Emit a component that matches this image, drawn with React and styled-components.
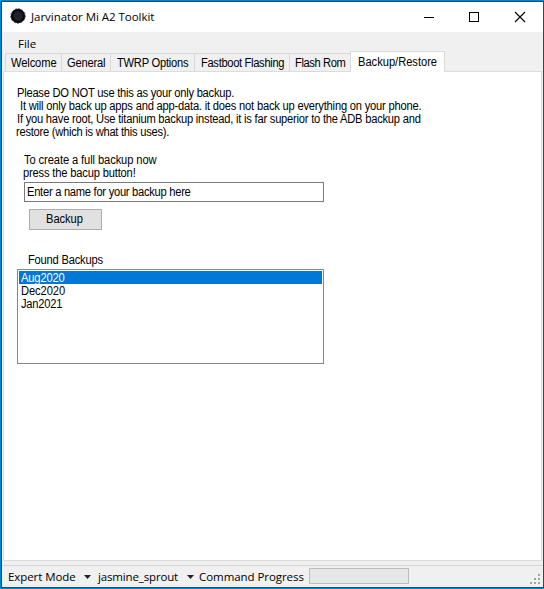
import React from 'react';
import styled, { createGlobalStyle } from 'styled-components';

const GlobalStyle = createGlobalStyle`
  * { box-sizing: border-box; }
  body { margin: 0; background: #fff; overflow: hidden; }
`;

const Window = styled.div`
  width: 544px;
  height: 589px;
  display: flex;
  flex-direction: column;
  background: #f0f0f0;
  border: 1px solid #0086d0;
  border-right: 0;
  color: #000;
  font: 12px/13px "Liberation Sans", Arial, sans-serif;
`;

const Frame = styled.div`
  flex: 1;
  display: flex;
  flex-direction: column;
  border: 1px solid #12516f;
`;

const UiText = styled.span`
  font: 11.5px/16px "Open Sans", "Noto Sans", sans-serif;
  letter-spacing: ${(p) => p.$track || 0}px;
  white-space: pre;
`;

/* Slightly condensed, like the classic dialog face. */
const Text = styled.span`
  display: block;
  letter-spacing: ${(p) => p.$track || 0}px;
  margin-left: ${(p) => p.$indent || 0}px;
  white-space: pre;
  transform: scaleX(0.93);
  transform-origin: left top;
`;

const TitleBar = styled.header`
  height: 30px;
  flex: none;
  display: flex;
  align-items: center;
  padding: 0 17px 0 8px;
  background: #fff;
`;

const AppIcon = styled.svg`
  width: 16px;
  height: 16px;
  margin: 0 5px 2px 0;
`;

const Title = styled(UiText)`
  flex: 1;
  margin-top: -1px;
`;

const Controls = styled.div`
  display: flex;
  gap: 34px;
  margin-bottom: 1px;
`;

const ControlIcon = styled.svg`
  width: 12px;
  height: 12px;
  display: block;
`;

const MenuBar = styled.nav`
  height: 19px;
  flex: none;
  padding: 4px 0 0 16px;
  display: flex;
`;

const Tabs = styled.div`
  height: 20px;
  flex: none;
  display: flex;
  align-items: flex-end;
  padding-left: 3px;
`;

const Tab = styled.div`
  width: ${(p) => p.$width}px;
  height: 18px;
  padding: 3px 0 0 ${(p) => p.$pad}px;
  border: 1px solid #d9d9d9;
  border-width: 1px 0 0 1px;
  background: #f0f0f0;
`;

const ActiveTab = styled(Tab)`
  height: 21px;
  padding-top: 4px;
  border-right-width: 1px;
  background: #fff;
  margin-bottom: -1px;
  z-index: 1;
`;

const Page = styled.main`
  width: 539px;
  height: 490px;
  flex: none;
  margin-left: 1px;
  border: 1px solid #dcdcdc;
  background: #fff;
  padding: 15px 0 0 13px;
  display: flex;
  flex-direction: column;
  align-items: flex-start;
`;

const Prompt = styled.div`
  margin: 15px 0 0 6px;
`;

const NameField = styled.div`
  width: 300px;
  height: 20px;
  margin: 2px 0 0 7px;
  padding: 3px 0 0 2px;
  border: 1px solid #7a7a7a;
`;

const Button = styled.button`
  width: 73px;
  height: 21px;
  margin: 7px 0 0 12px;
  padding: 0;
  border: 1px solid #adadad;
  background: #e1e1e1;
  font: inherit;
  color: inherit;
  display: flex;
  align-items: center;
  padding-left: 16px;
`;

const ListLabel = styled.div`
  margin: 24px 0 2px 11px;
`;

const List = styled.div`
  width: 307px;
  height: 95px;
  border: 1px solid #828790;
  padding: 1px;
`;

const ListItem = styled.div`
  height: 13px;
  padding: 1px 0 0 2px;
  background: ${(p) => (p.$selected ? '#0078d7' : 'transparent')};
  color: ${(p) => (p.$selected ? '#fff' : '#000')};
`;

const StatusBar = styled.footer`
  height: 22px;
  flex: none;
  margin-top: 4px;
  border-top: 1px solid #d7d7d7;
  display: flex;
  align-items: flex-start;
  padding: 0 3px 0 6px;
`;

const StatusItem = styled(UiText)`
  width: ${(p) => p.$width}px;
  padding-top: 3px;
`;

const DropArrow = styled.svg`
  width: 7px;
  height: 4px;
  margin: 9px ${(p) => p.$gap}px 0 0;
`;

const Progress = styled.div`
  width: 100px;
  height: 16px;
  margin-top: 2px;
  border: 1px solid #bcbcbc;
  background: #e6e6e6;
`;

const Grip = styled.svg`
  width: 10px;
  height: 10px;
  margin: 8px 0 0 auto;
`;

const tabs = [
  { label: 'Welcome', width: 56, pad: 5, track: -0.13 },
  { label: 'General', width: 49, pad: 5, track: -0.21 },
  { label: 'TWRP Options', width: 84, pad: 6, track: -0.26 },
  { label: 'Fastboot Flashing', width: 95, pad: 5.5, track: -0.35 },
  { label: 'Flash Rom', width: 61, pad: 5, track: -0.42 },
];

const backups = [
  { name: 'Aug2020', track: -0.17 },
  { name: 'Dec2020', track: -0.1 },
  { name: 'Jan2021', track: -0.23 },
];

const Arrow = ({ gap }) => (
  <DropArrow viewBox="0 0 7 4" $gap={gap}>
    <path d="M0 0h7L3.5 4z" fill="#222" />
  </DropArrow>
);

export default function App() {
  return (
    <Window>
      <GlobalStyle />
      <Frame>
        <TitleBar>
          <AppIcon viewBox="0 0 16 16">
            <circle cx="8" cy="8" r="7.2" fill="#17151f" stroke="#4a427c" strokeWidth="1" strokeDasharray="2 1.4" />
            <circle cx="8" cy="8" r="6" fill="none" stroke="#08080c" strokeWidth="1.6" />
            <circle cx="8" cy="8" r="3.6" fill="#20212b" stroke="#30303b" strokeWidth="1" strokeDasharray="1 1" />
          </AppIcon>
          <Title $track={-0.03}>Jarvinator Mi A2 Toolkit</Title>
          <Controls>
            <ControlIcon viewBox="0 0 12 12" stroke="#000" fill="none">
              <path d="M2 6.5h10" />
            </ControlIcon>
            <ControlIcon viewBox="0 0 12 12" stroke="#000" fill="none">
              <rect x="1.5" y="1.5" width="9" height="9" />
            </ControlIcon>
            <ControlIcon viewBox="0 0 12 12" stroke="#000" fill="none">
              <path d="M1 1l10 10M11 1L1 11" strokeWidth="1.1" />
            </ControlIcon>
          </Controls>
        </TitleBar>
        <MenuBar>
          <UiText>File</UiText>
        </MenuBar>
        <Tabs>
          {tabs.map((t) => (
            <Tab key={t.label} $width={t.width} $pad={t.pad}>
              <Text $track={t.track}>{t.label}</Text>
            </Tab>
          ))}
          <ActiveTab $width={95} $pad={6.5}>
            <Text $track={-0.03}>Backup/Restore</Text>
          </ActiveTab>
        </Tabs>
        <Page>
          <Text $track={-0.26}>Please DO NOT use this as your only backup.</Text>
          <Text $track={-0.22} $indent={3}>It will only back up apps and app-data. it does not back up everything on your phone.</Text>
          <Text $track={-0.24}>If you have root, Use titanium backup instead, it is far superior to the ADB backup and</Text>
          <Text $track={-0.28} $indent={-1}>restore (which is what this uses).</Text>
          <Prompt>
            <Text $track={-0.11} $indent={1}>To create a full backup now</Text>
            <Text $track={-0.19}>press the bacup button!</Text>
          </Prompt>
          <NameField>
            <Text $track={-0.29}>Enter a name for your backup here</Text>
          </NameField>
          <Button type="button">
            <Text $track={-0.05}>Backup</Text>
          </Button>
          <ListLabel>
            <Text $track={-0.23}>Found Backups</Text>
          </ListLabel>
          <List>
            {backups.map((b, i) => (
              <ListItem key={b.name} $selected={i === 0}>
                <Text $track={b.track}>{b.name}</Text>
              </ListItem>
            ))}
          </List>
        </Page>
        <StatusBar>
          <StatusItem $width={76} $track={-0.08}>Expert Mode</StatusItem>
          <Arrow gap={7} />
          <StatusItem $width={89} $track={-0.15}>jasmine_sprout</StatusItem>
          <Arrow gap={5} />
          <StatusItem $width={110} $track={-0.06}>Command Progress</StatusItem>
          <Progress />
          <Grip viewBox="0 0 10 10" fill="#a3a3a3">
            <path d="M8 0h2v2h-2zM4 4h2v2h-2zM8 4h2v2h-2zM0 8h2v2h-2zM4 8h2v2h-2zM8 8h2v2h-2z" />
          </Grip>
        </StatusBar>
      </Frame>
    </Window>
  );
}
